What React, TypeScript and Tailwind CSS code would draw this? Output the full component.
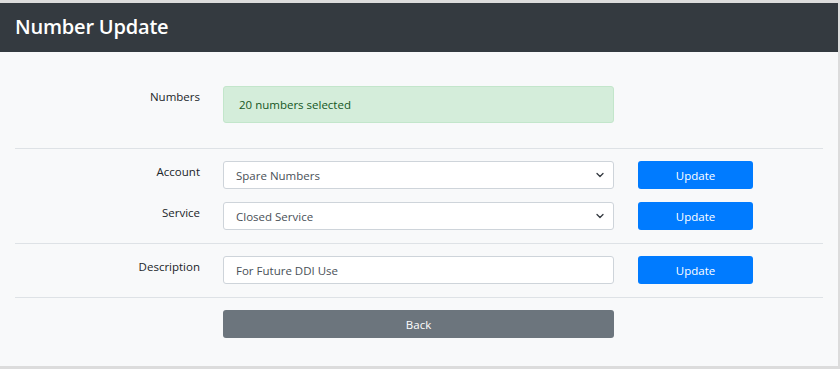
import React from 'react';

const font = { fontFamily: '"Open Sans", "Noto Sans", Arial, sans-serif' };

const Chevron: React.FC = () => (
  <svg width="10" height="8" viewBox="0 0 16 16" className="text-[#343a40]">
    <path d="M2 5l6 6 6-6" fill="none" stroke="currentColor" strokeWidth="2.6" strokeLinecap="round" strokeLinejoin="round" />
  </svg>
);

const UpdateButton: React.FC = () => (
  <button className="ml-[24px] w-[115px] h-[28px] pt-[2px] rounded-[3px] bg-[#007bff] text-white text-[11.5px]">
    Update
  </button>
);

const Label: React.FC<{ text: string }> = ({ text }) => (
  <div className="w-[185px] text-right text-[11.5px] leading-[22px] text-[#212529]">{text}</div>
);

const SelectBox: React.FC<{ value: string }> = ({ value }) => (
  <div className="ml-[23px] w-[391px] h-[28px] flex items-center justify-between bg-white border border-[#ced4da] rounded-[3px] pl-[12px] pr-[8px] text-[11.5px] text-[#495057]">
    <span className="pt-[2px]">{value}</span>
    <Chevron />
  </div>
);

export default function App() {
  return (
    <div className="h-[369px] w-[840px] bg-[#dcdcdc] pt-[3px] pr-[2px]" style={font}>
      <div className="h-[363px] bg-[#f8f9fa] flex flex-col">
        {/* Header */}
        <div className="h-[49px] bg-[#343a40] flex items-center px-[15px] pb-[2px]">
          <h1 className="text-white text-[20px] font-semibold tracking-[-0.2px]">Number Update</h1>
        </div>

        <div className="px-[15px]">
          {/* Numbers */}
          <div className="flex items-start mt-[34px]">
            <Label text="Numbers" />
            <div className="ml-[23px] w-[391px] h-[37px] flex items-center pl-[15px] pt-[1px] bg-[#d4edda] border border-[#c3e6cb] rounded-[3px] text-[11.5px] text-[#155724]">
              20 numbers selected
            </div>
          </div>

          <hr className="mt-[25px] border-t border-[#dee2e6]" />

          {/* Account / Service */}
          <div className="flex items-start mt-[12px]">
            <Label text="Account" />
            <SelectBox value="Spare Numbers" />
            <UpdateButton />
          </div>
          <div className="flex items-start mt-[13px]">
            <Label text="Service" />
            <SelectBox value="Closed Service" />
            <UpdateButton />
          </div>

          <hr className="mt-[13px] border-t border-[#dee2e6]" />

          {/* Description */}
          <div className="flex items-start mt-[12px]">
            <Label text="Description" />
            <div className="ml-[23px] w-[391px] h-[28px] flex items-center bg-white border border-[#ced4da] rounded-[3px] pl-[12px] pt-[2px] text-[11.5px] text-[#495057]">
              For Future DDI Use
            </div>
            <UpdateButton />
          </div>

          <hr className="mt-[13px] border-t border-[#dee2e6]" />

          {/* Back */}
          <div className="flex mt-[12px]">
            <div className="w-[185px]" />
            <button className="ml-[23px] w-[391px] h-[28px] pt-[2px] rounded-[3px] bg-[#6c757d] text-white text-[11.5px]">
              Back
            </button>
          </div>
        </div>
      </div>
    </div>
  );
}
